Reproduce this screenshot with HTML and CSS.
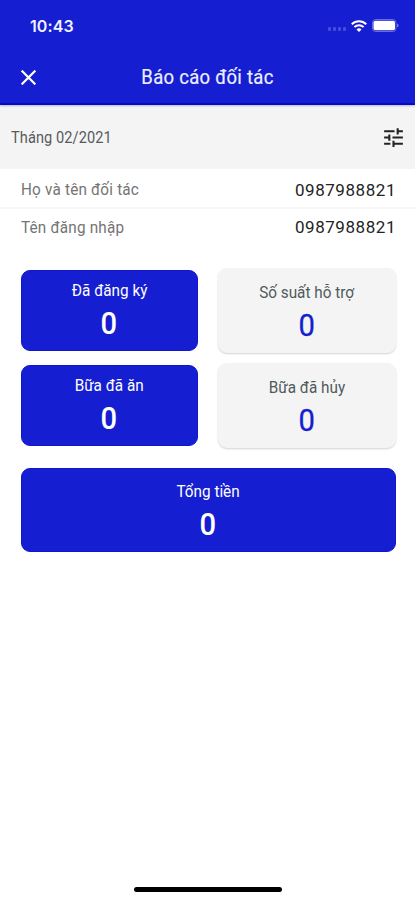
FILE: index.html
```html
<!DOCTYPE html>
<html lang="vi">
<head>
<meta charset="utf-8">
<meta name="viewport" content="width=device-width, initial-scale=1">
<title>Báo cáo đối tác</title>
<link rel="stylesheet" href="styles.css">
</head>
<body>
<div class="screen">
  <header class="header">
    <div class="status">
      <span class="time">10:43</span>
      <div class="status-icons">
        <span class="signal"><i></i><i></i><i></i><i></i></span>
        <svg class="wifi" viewBox="0 0 16 12" fill="none" stroke="#fff" stroke-width="2">
          <path d="M.8 4.3a10.3 10.3 0 0 1 14.4 0M3.4 7.1a6.6 6.6 0 0 1 9.2 0"/>
          <path d="M8 12 5.5 9.5a3.6 3.6 0 0 1 5 0z" fill="#fff" stroke="none"/>
        </svg>
        <svg class="battery" viewBox="0 0 27 13">
          <rect x=".5" y=".5" width="23.5" height="12" rx="3.2" fill="none" stroke="#fff" stroke-opacity=".35"/>
          <rect x="1.5" y="1.7" width="21.5" height="9.6" rx="1.8" fill="#fff"/>
          <path d="M25.2 4.5v4c1.8-.7 1.8-3.3 0-4z" fill="#fff" fill-opacity=".5"/>
        </svg>
      </div>
    </div>
    <div class="nav">
      <svg class="close" viewBox="0 0 14 14" stroke="#fff" stroke-width="2.1"><path d="M.6.6l12.8 12.8M13.4.6.6 13.4"/></svg>
      <h1 class="title">Báo cáo đối tác</h1>
    </div>
  </header>
  <section class="filter">
    <span class="month">Tháng 02/2021</span>
    <svg class="tune" viewBox="0 0 24 24" fill="#222"><path d="M3 17v2h6v-2H3zM3 5v2h10V5H3zm10 16v-2h8v-2h-8v-2h-2v6h2zM7 9v2H3v2h4v2h2V9H7zm14 4v-2H11v2h10zm-6-4h2V7h4V5h-4V3h-2v6z"/></svg>
  </section>
  <section class="info">
    <div class="row"><span class="label">Họ và tên đối tác</span><span class="value">0987988821</span></div>
    <div class="row"><span class="label">Tên đăng nhập</span><span class="value">0987988821</span></div>
  </section>
  <main class="stats">
    <div class="card primary"><span class="caption">Đã đăng ký</span><span class="count">0</span></div>
    <div class="card light"><span class="caption">Số suất hỗ trợ</span><span class="count">0</span></div>
    <div class="card primary"><span class="caption">Bữa đã ăn</span><span class="count">0</span></div>
    <div class="card light"><span class="caption">Bữa đã hủy</span><span class="count">0</span></div>
    <div class="card primary total"><span class="caption">Tổng tiền</span><span class="count">0</span></div>
  </main>
  <footer class="home"><span class="home-bar"></span></footer>
</div>
</body>
</html>
```
FILE: styles.css
```css
* { box-sizing: border-box; }
body { margin: 0; background: #fff; font-family: Roboto, "Liberation Sans", sans-serif; }
.screen { height: 900px; display: flex; flex-direction: column; overflow: hidden; }
.header { height: 105px; background: #151ed0; border-bottom: 2px solid #0509c8; box-shadow: 0 1px 2px rgba(0, 0, 60, .25); z-index: 1; }
.status { height: 51px; padding: 0 16px 0 30px; display: flex; align-items: center; justify-content: space-between; }
.time { font: 600 16px/20px Inter, sans-serif; color: #f0f1ff; letter-spacing: .1px; }
.status-icons { display: flex; align-items: center; }
.signal { display: flex; gap: 2px; margin: 7px 5px 0 0; }
.signal i { width: 3px; height: 4px; border-radius: 1px; background: #444cdb; }
.wifi { width: 16px; height: 12px; margin-right: 5px; }
.battery { width: 27px; height: 13px; }
.nav { height: 52px; display: grid; grid-template-columns: 42px 1fr 42px; align-items: center; }
.close { width: 15px; height: 15px; margin-left: 21px; }
.title { margin: 0; font-size: 20px; line-height: 28px; font-weight: 400; color: #eceeff; text-align: center; letter-spacing: .3px; -webkit-text-stroke: .2px; transform: scaleX(.925); }
.filter { height: 64px; padding: 0 9px 0 11px; display: flex; align-items: center; justify-content: space-between; background: #f4f4f4; }
.month { font-size: 16px; color: #555b5c; letter-spacing: .1px; transform: scaleX(.91); transform-origin: left; }
.tune { width: 25px; height: 25px; }
.info { height: 77px; }
.row { height: 36px; padding: 0 19px 0 21px; display: flex; align-items: center; justify-content: space-between; }
.row:first-child { height: 40px; padding-top: 3px; border-bottom: 2px solid #f7f7f7; }
.label { font-size: 16px; color: #747474; letter-spacing: .2px; transform: scaleX(.955); transform-origin: left; }
.value { font-size: 17px; color: #242424; letter-spacing: .55px; }
.stats { margin: 22px 19px 0 20.5px; display: grid; grid-template-columns: 177.5px 178.5px; justify-content: space-between; row-gap: 10px; align-items: center; }
.card { border-radius: 9px; display: flex; flex-direction: column; align-items: center; }
.primary { height: 81px; padding-top: 10px; background: #151ed0; border: 1px solid #0f17cc; color: #fff; }
.light { height: 85px; padding-top: 15px; background: #f4f4f4; box-shadow: 0 1px 2px rgba(0, 0, 0, .18); color: #505a5c; }
.caption { font-size: 16px; line-height: 20px; transform: scaleX(.955); }
.count { margin-top: 3px; font-size: 31px; line-height: 40px; font-weight: 500; transform: scaleX(.94); }
.light .count { color: #151ed0; font-weight: 400; -webkit-text-stroke: .3px; }
.total { grid-column: 1 / -1; height: 84px; padding-top: 13px; margin-top: 10px; }
.home { margin-top: auto; height: 14px; display: flex; justify-content: center; }
.home-bar { width: 148px; height: 5px; margin-top: 1px; border-radius: 3px; background: #000; }
```
